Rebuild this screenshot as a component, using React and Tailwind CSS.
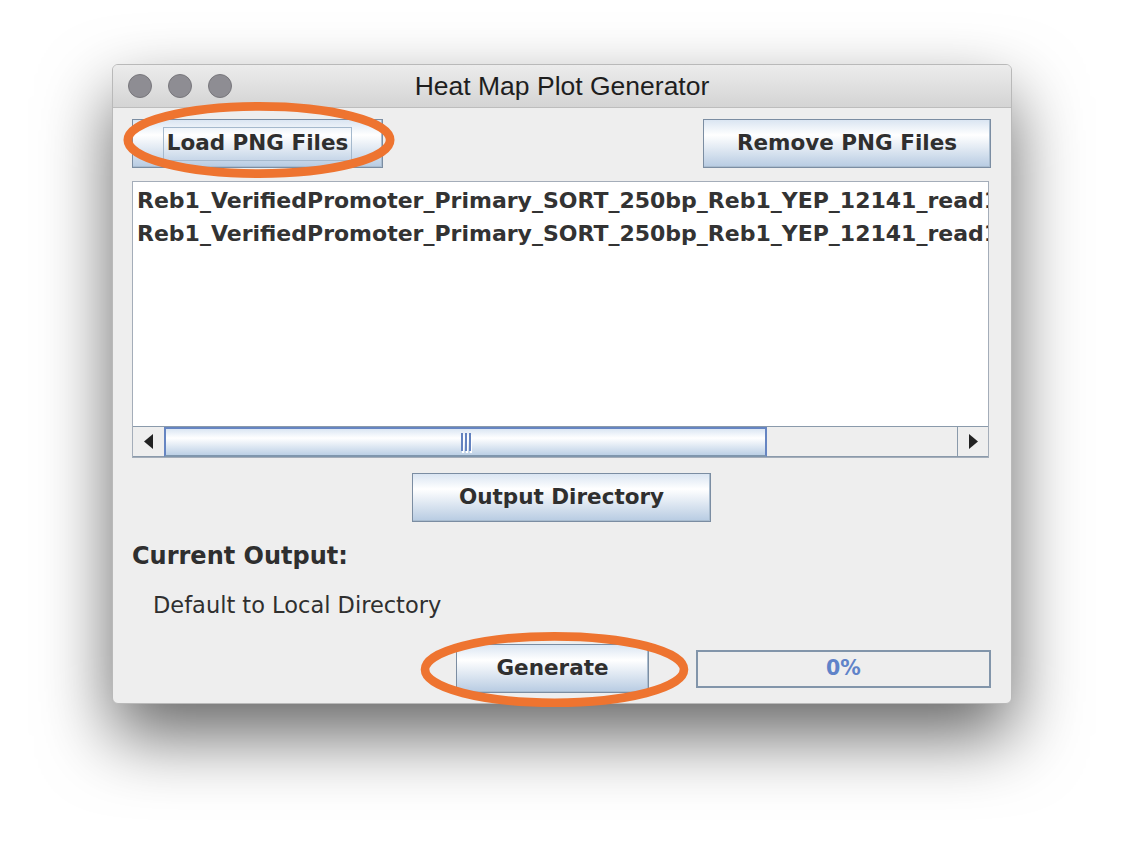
import React from "react";

const btn =
  "flex items-center justify-center border border-[#7b8da2] bg-[linear-gradient(180deg,#dae5f2_0%,#ffffff_32%,#b7cbe2_100%)] text-[21.5px] font-bold text-[#2f2f2f] shadow-[inset_-1px_-1px_0_#a9bccf]";

const ui = "font-['DejaVu_Sans',sans-serif]";

function Ellipse({ className }) {
  return (
    <svg className={className} viewBox="0 0 280 80" fill="none">
      <ellipse cx="140" cy="40" rx="134.5" ry="34.5" stroke="#ee7430" strokeWidth="9" />
    </svg>
  );
}

function Arrow({ dir }) {
  return (
    <svg width="9" height="15" viewBox="0 0 9 15">
      {dir === "left" ? (
        <polygon points="9,0 9,15 0,7.5" fill="#222" />
      ) : (
        <polygon points="0,0 0,15 9,7.5" fill="#222" />
      )}
    </svg>
  );
}

const fileName = "Reb1_VerifiedPromoter_Primary_SORT_250bp_Reb1_YEP_12141_read1";

export default function App() {
  return (
    <div className={`${ui} relative w-[1124px] h-[864px] bg-white overflow-hidden pt-[64px] pl-[112px]`}>
      <div className="w-[900px] h-[640px] flex flex-col rounded-[6px] border border-[#b9b9b9] bg-[#eeeeee] shadow-[0_32px_70px_rgba(0,0,0,0.6)] overflow-hidden">
        {/* title bar */}
        <div className="relative h-[43px] shrink-0 flex items-center px-[15px] gap-[16px] bg-[linear-gradient(180deg,#ececec,#d4d4d4)] border-b border-[#bdbdbd]">
          <span className="w-[24px] h-[24px] rounded-full bg-[#8e8d93] border border-[#78777c]" />
          <span className="w-[24px] h-[24px] rounded-full bg-[#8e8d93] border border-[#78777c]" />
          <span className="w-[24px] h-[24px] rounded-full bg-[#8e8d93] border border-[#78777c]" />
          <div className="absolute inset-0 pt-[2px] flex items-center justify-center font-['Liberation_Sans',sans-serif] text-[26.5px] text-[#1e1e1e]">
            Heat Map Plot Generator
          </div>
        </div>

        {/* content */}
        <div className="flex-1 flex flex-col pl-[19px] pr-[20px]">
          <div className="mt-[11px] flex justify-between">
            <button className={`${btn} w-[251px] h-[49px]`}>
              <span className="border border-[#a5b9cd] px-[3px] h-[34px] flex items-center">Load PNG Files</span>
            </button>
            <button className={`${btn} w-[288px] h-[49px]`}>Remove PNG Files</button>
          </div>

          <div className="mt-[13px] w-[857px] h-[277px] flex flex-col border border-[#a4adb9] bg-white">
            <div className="flex-1 overflow-hidden pl-[4px] pt-[2px] text-[22px] font-bold text-[#333] leading-[33px] whitespace-nowrap">
              <div>{fileName}</div>
              <div>{fileName}</div>
            </div>
            <div className="h-[31px] flex border-t border-[#8a9aab] bg-[#eeeeee]">
              <div className="w-[31px] flex items-center justify-center border-b border-[#8a9aab]">
                <Arrow dir="left" />
              </div>
              <div className="w-[603px] flex items-center justify-center gap-[2px] border-2 border-[#6685c2] border-b-[#7f96ad] bg-[linear-gradient(180deg,#dbe6f3_0%,#ffffff_35%,#bcd0e6_100%)]">
                <span className="w-[2px] h-[18px] bg-[#6382bf] shadow-[1px_2px_0_#fff]" />
                <span className="w-[2px] h-[18px] bg-[#6382bf] shadow-[1px_2px_0_#fff]" />
                <span className="w-[2px] h-[18px] bg-[#6382bf] shadow-[1px_2px_0_#fff]" />
              </div>
              <div className="flex-1 border-b border-[#8a9aab]" />
              <div className="w-[31px] flex items-center justify-center border-l border-b border-[#8a9aab]">
                <Arrow dir="right" />
              </div>
            </div>
          </div>

          <button className={`${btn} self-center mt-[15px] w-[299px] h-[49px]`}>Output Directory</button>

          <div className="mt-[20px] text-[24px] font-bold text-[#2f2f2f] leading-[28px]">Current Output:</div>
          <div className="mt-[21px] pl-[21px] text-[22.5px] text-[#2f2f2f] leading-[28px]">Default to Local Directory</div>

          <div className="mt-auto mb-[10px] flex items-center justify-end gap-[47px]">
            <button className={`${btn} w-[193px] h-[49px]`}>Generate</button>
            <div className="w-[295px] h-[38px] flex items-center justify-center border-2 border-[#8295aa] bg-[#eeeeee] text-[20.5px] font-bold text-[#5f83c9]">
              0%
            </div>
          </div>
        </div>
      </div>

      {/* annotation ellipses */}
      <Ellipse className="absolute left-[120px] top-[101px] w-[278px] h-[78px]" />
      <Ellipse className="absolute left-[416px] top-[631px] w-[277px] h-[77px]" />
    </div>
  );
}
